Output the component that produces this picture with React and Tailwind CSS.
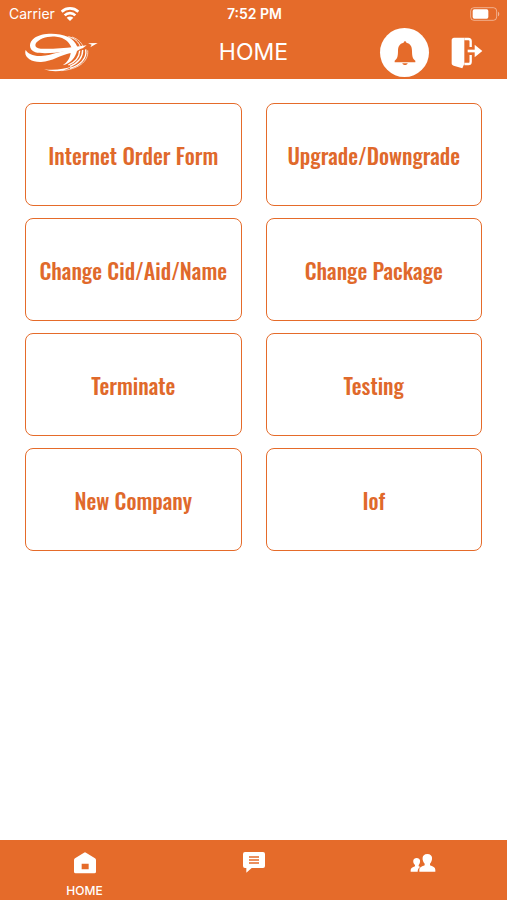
// App.jsx
import { useState } from 'react'

const menuItems = [
  'Internet Order Form',
  'Upgrade/Downgrade',
  'Change Cid/Aid/Name',
  'Change Package',
  'Terminate',
  'Testing',
  'New Company',
  'Iof',
]

const tabs = [
  { id: 'home', label: 'HOME', Icon: HomeIcon },
  { id: 'messages', label: 'MESSAGES', Icon: ChatIcon },
  { id: 'contacts', label: 'CONTACTS', Icon: PeopleIcon },
]

function WifiIcon() {
  return (
    <svg className="w-[18px] h-[14px]" viewBox="0 0 54 42" fill="none" stroke="currentColor" strokeWidth="8">
      <path d="M2 14C16 1 38 1 52 14" />
      <path d="M11 25C20 16 34 16 43 25" />
      <path d="M27 42L17 32C23 27 31 27 37 32Z" fill="currentColor" stroke="none" />
    </svg>
  )
}

function BatteryIcon() {
  return (
    <svg className="w-[30px] h-[14px]" viewBox="0 0 90 42" fill="none">
      <rect x="2" y="2" width="78" height="38" rx="10" stroke="currentColor" strokeOpacity="0.45" strokeWidth="3" />
      <rect x="8" y="7" width="47" height="28" rx="5" fill="currentColor" />
      <path d="M84 14C89 16 89 26 84 28Z" fill="currentColor" fillOpacity="0.5" />
    </svg>
  )
}

function Logo() {
  return (
    <svg className="w-[75px] h-[39px]" viewBox="72 96 225 117" fill="currentColor">
      {/* upper loop */}
      <path d="M106 154C84 146 86 123 103 111C124 95 173 94 203 107C217 113 227 124 232 137L214 139C208 123 195 110 169 107C143 104 118 113 108 126C103 136 108 142 122 143C150 145 190 141 222 138L260 133L248 142C218 150 138 162 106 154Z" />
      {/* lower sweep */}
      <path d="M77 147C84 158 99 166 123 165C160 162 190 147 222 144L245 142L231 150C226 170 212 187 188 193C203 183 210 171 212 156C180 162 158 181 123 183C92 184 70 167 77 147Z" />
      {/* trails */}
      <g fill="none" stroke="currentColor">
        <path d="M205 107C224 112 236 122 241 137" strokeWidth="3" />
        <path d="M216 108C234 114 244 124 248 135" strokeWidth="2" />
        <path d="M239 149C238 168 224 184 205 192" strokeWidth="4" />
        <path d="M248 147C248 170 232 187 210 196" strokeWidth="4" />
        <path d="M257 145C262 174 239 193 210 202" strokeWidth="4" />
        <path d="M263 148C267 183 232 205 184 209" strokeWidth="2" />
      </g>
      <path d="M132 205C164 209 192 205 218 195C193 213 160 215 132 205Z" />
      <path d="M264 127L293 126L271 139L275 131Z" />
    </svg>
  )
}

function BellIcon() {
  return (
    <svg className="w-[22px] h-[26px]" viewBox="0 0 66 78" fill="currentColor">
      <path d="M29 8C29 2 37 2 37 8C50 11 54 20 54 33C54 51 57 57 64 62V67H2V62C9 57 12 51 12 33C12 20 16 11 29 8Z" />
      <path d="M25 70H41C40 77 26 77 25 70Z" />
    </svg>
  )
}

function LogoutIcon() {
  return (
    <svg className="size-8" viewBox="0 0 96 96" fill="none">
      <path d="M9 2H40V80L34 94L8 86C4 85 2 83 2 79V9C2 5 5 2 9 2Z" fill="currentColor" />
      <path d="M40 6H52Q59 6 59 13V30M59 54V74Q59 81 52 81H40" stroke="currentColor" strokeWidth="7" />
      <path d="M50 42H74" stroke="currentColor" strokeWidth="8" />
      <path d="M71 23L94 42L71 61Z" fill="currentColor" />
    </svg>
  )
}

function HomeIcon() {
  return (
    <svg className="size-6" viewBox="0 0 72 72" fill="currentColor" fillRule="evenodd">
      <path d="M33 5Q36 3 39 5L66 22Q69 24 69 28V62Q69 67 64 67H8Q3 67 3 62V28Q3 24 6 22ZM26 38V55H47V38Z" />
    </svg>
  )
}

function ChatIcon() {
  return (
    <svg className="size-6" viewBox="0 0 72 72" fill="none">
      <path d="M9 3H63Q69 3 69 9V45Q69 51 63 51H29L13 65V51H9Q3 51 3 45V9Q3 3 9 3Z" fill="currentColor" />
      <path d="M21 18H51M21 27H51M21 36H51" stroke="#e56b2a" strokeWidth="4" />
    </svg>
  )
}

function PeopleIcon() {
  return (
    <svg className="w-[26px] h-6" viewBox="0 0 78 72" fill="currentColor">
      <path d="M28 62V57C28 48 36 47 44 43V38C36 30 33 9 52 9C71 9 68 30 60 38V43C68 47 76 48 76 57V62Z" />
      <path d="M2 62V57C2 51 8 49 15 46V42C7 35 8 21 20 21C32 21 33 34 26 42V46L31 48C25 51 23 56 23 62Z" />
    </svg>
  )
}

export default function App() {
  const [activeTab, setActiveTab] = useState('home')

  return (
    <div className="min-h-screen flex flex-col bg-white font-['Inter',sans-serif]">
      <header className="bg-[#e56b2a] text-white">
        <div className="h-7 pl-[9px] pr-[7px] grid grid-cols-3 items-center">
          <div className="flex items-center gap-1.5">
            <span className="text-sm">Carrier</span>
            <WifiIcon />
          </div>
          <span className="text-sm font-semibold text-center">7:52 PM</span>
          <div className="flex justify-end">
            <BatteryIcon />
          </div>
        </div>

        <div className="h-[51px] px-6 pb-1 grid grid-cols-3 items-center">
          <Logo />
          <h1 className="text-[23px] text-center">HOME</h1>
          <div className="flex items-center justify-end gap-[22px]">
            <button
              className="size-[49px] rounded-full bg-white text-[#e56b2a] flex items-center justify-center"
              aria-label="Notifications"
            >
              <BellIcon />
            </button>
            <button aria-label="Log out">
              <LogoutIcon />
            </button>
          </div>
        </div>
      </header>

      <main className="flex-1 px-[25px] py-6">
        <div className="grid grid-cols-2 gap-x-6 gap-y-3">
          {menuItems.map((item) => (
            <button
              key={item}
              className="h-[103px] pt-0.5 rounded-lg border border-[#e56b2a] text-[#e0692b] text-[22px] font-medium font-['Oswald','Liberation_Sans_Narrow','Roboto_Condensed',sans-serif]"
            >
              {item}
            </button>
          ))}
        </div>
      </main>

      <nav className="h-[60px] bg-[#e56b2a] text-white grid grid-cols-3">
        {tabs.map(({ id, label, Icon }) => (
          <button
            key={id}
            className="flex flex-col items-center gap-2 pt-[11px]"
            aria-label={label}
            onClick={() => setActiveTab(id)}
          >
            <Icon />
            {activeTab === id && <span className="text-xs font-medium">{label}</span>}
          </button>
        ))}
      </nav>
    </div>
  )
}
